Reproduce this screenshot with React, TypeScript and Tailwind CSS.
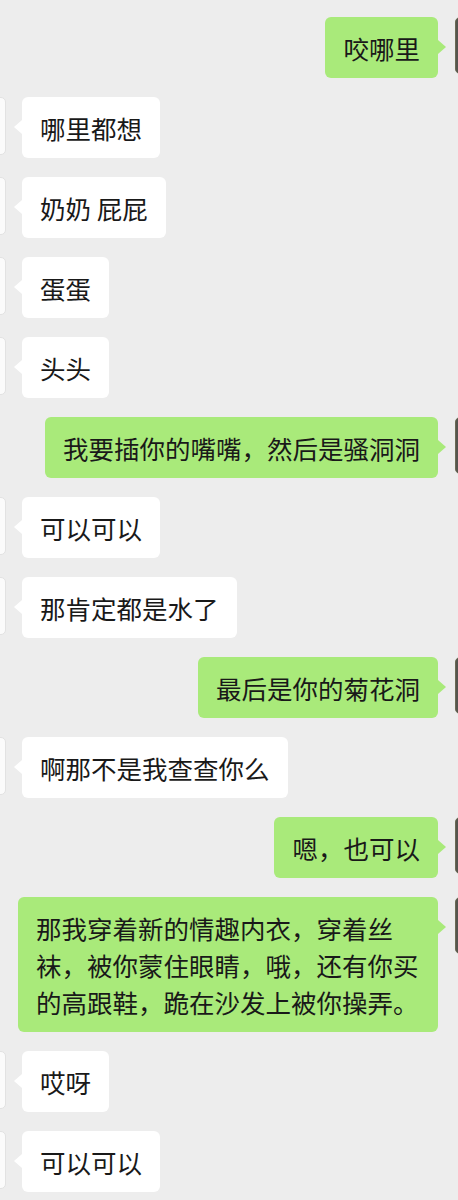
import React from "react";

type Msg = { id: number; mine: boolean; text: string };

const MESSAGES: Msg[] = [
  { id: 1, mine: true, text: "咬哪里" },
  { id: 2, mine: false, text: "哪里都想" },
  { id: 3, mine: false, text: "奶奶 屁屁" },
  { id: 4, mine: false, text: "蛋蛋" },
  { id: 5, mine: false, text: "头头" },
  { id: 6, mine: true, text: "我要插你的嘴嘴，然后是骚洞洞" },
  { id: 7, mine: false, text: "可以可以" },
  { id: 8, mine: false, text: "那肯定都是水了" },
  { id: 9, mine: true, text: "最后是你的菊花洞" },
  { id: 10, mine: false, text: "啊那不是我查查你么" },
  { id: 11, mine: true, text: "嗯，也可以" },
  {
    id: 12,
    mine: true,
    text: "那我穿着新的情趣内衣，穿着丝袜，被你蒙住眼睛，哦，还有你买的高跟鞋，跪在沙发上被你操弄。",
  },
  { id: 13, mine: false, text: "哎呀" },
  { id: 14, mine: false, text: "可以可以" },
];

function Bubble({ msg }: { msg: Msg }) {
  return (
    <div className={msg.mine ? "relative flex justify-end pr-[20px]" : "relative flex justify-start pl-[22px]"}>
      {/* avatar, mostly off screen */}
      {msg.mine ? (
        <div className="absolute top-0 left-[455px] h-[57px] w-[57px] rounded-[5px] bg-[#56554f] border border-[#6b6a55]" />
      ) : (
        <div className="absolute top-0 left-[-52px] h-[58px] w-[58px] rounded-[5px] bg-[#fbfbfb] border border-[#e2e2e2]" />
      )}
      <div
        className={
          msg.mine
            ? "relative max-w-[420px] rounded-[6px] bg-[#a9ea7a] px-[18px] py-3"
            : "relative max-w-[420px] rounded-[6px] bg-white px-[18px] py-3"
        }
      >
        {msg.mine ? (
          <span className="absolute top-[23px] right-[-8px] h-0 w-0 border-y-[7px] border-l-[8px] border-y-transparent border-l-[#a9ea7a]" />
        ) : (
          <span className="absolute top-[23px] left-[-8px] h-0 w-0 border-y-[7px] border-r-[8px] border-y-transparent border-r-white" />
        )}
        <p className="text-[25.5px] leading-[37px] text-[#191919] break-all">{msg.text}</p>
      </div>
    </div>
  );
}

export default function App() {
  return (
    <div
      className="min-h-[1200px] w-[458px] overflow-hidden bg-[#ededed] pt-[17px]"
      style={{ fontFamily: '"Noto Sans CJK SC", "Noto Sans", sans-serif' }}
    >
      <div className="flex flex-col gap-[19px]">
        {MESSAGES.map((m) => (
          <Bubble key={m.id} msg={m} />
        ))}
      </div>
    </div>
  );
}
